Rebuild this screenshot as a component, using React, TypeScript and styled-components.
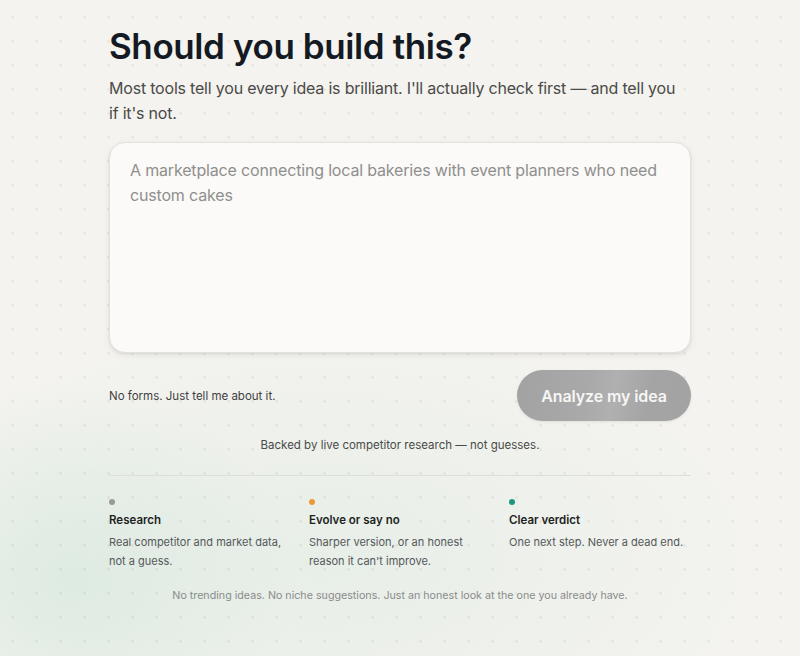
import React from "react";
import styled, { createGlobalStyle } from "styled-components";

const Global = createGlobalStyle`
  html, body { margin: 0; padding: 0; }
  body {
    font-family: Inter, "Noto Sans", sans-serif;
    background: #f3f2ee;
    min-height: 656px;
  }
`;

const Page = styled.div`
  position: relative;
  min-height: 656px;
  overflow: hidden;
  background:
    radial-gradient(circle at 1.5px 1.5px, rgba(160, 160, 150, 0.14) 1.2px, transparent 1.7px) 11px 16px / 24px 24px,
    radial-gradient(ellipse 300px 260px at 70px 580px, rgba(214, 232, 222, 0.7), rgba(214, 232, 222, 0) 75%),
    radial-gradient(ellipse 560px 300px at 320px 560px, rgba(226, 236, 229, 0.7), rgba(226, 236, 229, 0) 80%),
    #f4f3ef;
`;

const Column = styled.main`
  width: 582px;
  margin: 0 auto;
  padding-top: 24px;
  display: flex;
  flex-direction: column;
`;

const Title = styled.h1`
  margin: 0;
  font-size: 35px;
  line-height: 44px;
  font-weight: 600;
  letter-spacing: -0.4px;
  color: #141a24;
`;

const Lead = styled.p`
  margin: 8px 0 0;
  max-width: 574px;
  font-size: 16px;
  line-height: 25px;
  color: #4a4a48;
  letter-spacing: -0.2px;
`;

const Box = styled.textarea`
  margin-top: 16px;
  box-sizing: border-box;
  width: 582px;
  height: 211px;
  resize: none;
  border: 1px solid #e2e1dc;
  border-radius: 16px;
  background: #fbfaf8;
  box-shadow: 0 2px 6px rgba(0, 0, 0, 0.08), 0 1px 2px rgba(0, 0, 0, 0.05);
  padding: 15px 20px;
  font-family: inherit;
  font-size: 16px;
  line-height: 25px;
  letter-spacing: -0.17px;
  color: #333;
  outline: none;
  &::placeholder { color: #8f8f8c; }
`;

const ActionRow = styled.div`
  margin-top: 17px;
  display: flex;
  align-items: center;
  justify-content: space-between;
`;

const Hint = styled.span`
  font-size: 11.5px;
  color: #3f3f3d;
`;

const Analyze = styled.button`
  width: 174px;
  height: 51px;
  border: none;
  border-radius: 26px;
  background: linear-gradient(100deg, #a2a2a2 0%, #a9a9a9 40%, #b0b0b0 55%, #a4a4a4 75%, #a3a3a3 100%);
  box-shadow: 0 1px 3px rgba(0, 0, 0, 0.08);
  color: #f6f6f4;
  font-family: inherit;
  font-size: 16px;
  font-weight: 600;
  letter-spacing: -0.1px;
`;

const Backed = styled.p`
  margin: 17px 0 0;
  text-align: center;
  font-size: 11.5px;
  color: #4a4a48;
`;

const Divider = styled.hr`
  margin: 23px 0 0;
  border: none;
  height: 1px;
  background: #dcdfdb;
`;

const Features = styled.div`
  margin-top: 23px;
  display: grid;
  grid-template-columns: repeat(3, 200px);
`;

const Feature = styled.div`
  display: flex;
  flex-direction: column;
`;

const Dot = styled.span<{ $color: string }>`
  width: 6px;
  height: 6px;
  border-radius: 50%;
  background: ${(p) => p.$color};
`;

const FeatureTitle = styled.h3`
  margin: 7px 0 0;
  font-size: 11.5px;
  line-height: 16px;
  font-weight: 600;
  color: #1e1f22;
`;

const FeatureText = styled.p`
  margin: 5px 0 0;
  font-size: 11px;
  line-height: 19px;
  color: #55585a;
  max-width: 180px;
`;

const Footer = styled.p`
  margin: 18px 0 0;
  text-align: center;
  font-size: 10.7px;
  color: #8a8c8b;
`;

const features = [
  { color: "#9a9a98", title: "Research", text: "Real competitor and market data, not a guess." },
  { color: "#ec9a35", title: "Evolve or say no", text: "Sharper version, or an honest reason it can't improve." },
  { color: "#1d9a7a", title: "Clear verdict", text: "One next step. Never a dead end." },
];

export default function App() {
  return (
    <Page>
      <Global />
      <Column>
        <Title>Should you build this?</Title>
        <Lead>
          Most tools tell you every idea is brilliant. I'll actually check first — and tell you if it's not.
        </Lead>
        <Box placeholder="A marketplace connecting local bakeries with event planners who need custom cakes" />
        <ActionRow>
          <Hint>No forms. Just tell me about it.</Hint>
          <Analyze type="button">Analyze my idea</Analyze>
        </ActionRow>
        <Backed>Backed by live competitor research — not guesses.</Backed>
        <Divider />
        <Features>
          {features.map((f) => (
            <Feature key={f.title}>
              <Dot $color={f.color} />
              <FeatureTitle>{f.title}</FeatureTitle>
              <FeatureText>{f.text}</FeatureText>
            </Feature>
          ))}
        </Features>
        <Footer>No trending ideas. No niche suggestions. Just an honest look at the one you already have.</Footer>
      </Column>
    </Page>
  );
}
